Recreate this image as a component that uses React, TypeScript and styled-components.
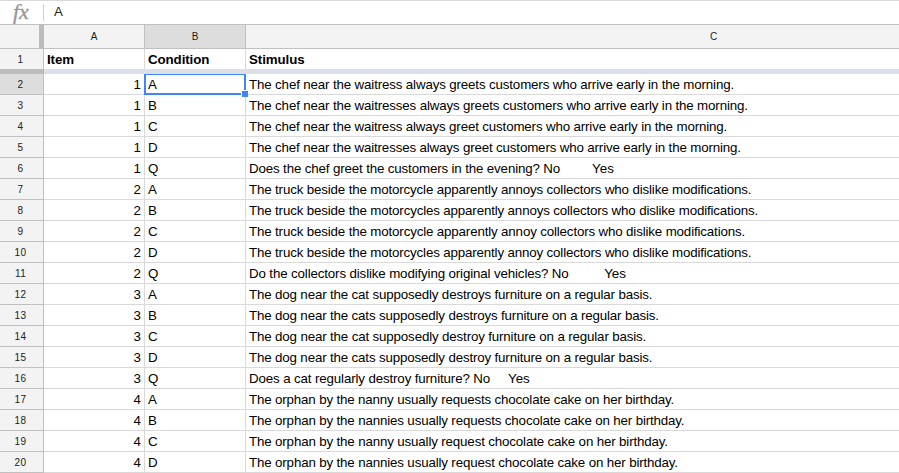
import React from "react";
import styled, { createGlobalStyle } from "styled-components";

const GlobalStyle = createGlobalStyle`
  html, body { margin: 0; padding: 0; background: #fff; }
  * { box-sizing: border-box; }
`;

const Sheet = styled.div`
  width: 899px;
  height: 473px;
  overflow: hidden;
  background: #fff;
  color: #000;
  font-family: "Liberation Sans", Arial, sans-serif;
  font-size: 13.333px;
`;

const FormulaBar = styled.div`
  display: flex;
  align-items: center;
  height: 24px;
  border-top: 1px solid #d9d9d9;
`;

const FunctionLabel = styled.div`
  width: 44px;
  height: 17px;
  padding-left: 13px;
  margin-top: -1px;
  border-right: 1px solid #d0d0d0;
  color: #969696;
  -webkit-text-stroke: 0.4px #a0a0a0;
  font: italic 22px/15px "Liberation Serif", serif;
`;

const FormulaText = styled.div`
  padding-left: 10px;
  margin-top: -2px;
  color: #222;
`;

const Grid = styled.div`
  display: grid;
  grid-template-columns: 44px 101px 101px 936px;
`;

const HeaderCell = styled.div<{ $active?: boolean }>`
  height: 25px;
  border: solid #c0c0c0;
  border-width: 1px 1px 1px 0;
  background: ${(p) => (p.$active ? "#dddddd" : "#f3f3f3")};
  color: #222;
  font-size: 10px;
  line-height: 24px;
  text-align: center;
`;

const Corner = styled(HeaderCell)`
  border-right: 5px solid #bcbcbc;
`;

const RowHeader = styled.div<{ $active?: boolean; $frozen?: boolean }>`
  height: ${(p) => (p.$frozen ? 20 : 21)}px;
  padding-right: 2px;
  border: solid #c0c0c0;
  border-width: ${(p) => (p.$frozen ? "0 1px 0 0" : "0 1px 1px 0")};
  background: ${(p) => (p.$active ? "#dddddd" : "#f3f3f3")};
  color: #222;
  font-size: 10px;
  letter-spacing: 0.4px;
  line-height: 22px;
  text-align: center;
`;

const Cell = styled.div<{ $right?: boolean; $frozen?: boolean }>`
  position: relative;
  height: ${(p) => (p.$frozen ? 20 : 21)}px;
  padding: 0 3px;
  border: solid #d9d9d9;
  border-width: ${(p) => (p.$frozen ? "0 1px 0 0" : "0 1px 1px 0")};
  font-weight: ${(p) => (p.$frozen ? "bold" : "normal")};
  letter-spacing: ${(p) => (p.$frozen ? "-0.1px" : "0")};
  line-height: 21px;
  text-align: ${(p) => (p.$right ? "right" : "left")};
  white-space: pre;
`;

const Line = styled.span<{ $track: number }>`
  letter-spacing: ${(p) => p.$track}px;
`;

const Answer = styled.span<{ $gap: number }>`
  margin-left: ${(p) => p.$gap}px;
`;

const FreezeHandle = styled.div`
  height: 5px;
  background: #bcbcbc;
`;

const FreezeBar = styled.div`
  grid-column: 2 / -1;
  height: 5px;
  background: #dbdfe7;
`;

const Selection = styled.div`
  position: absolute;
  z-index: 1;
  inset: 0 -1px -1px -1px;
  border: 2px solid #4285f4;
  border-top-width: 1px;
`;

const FillHandle = styled.div`
  position: absolute;
  right: -4px;
  bottom: -4px;
  width: 7px;
  height: 7px;
  border: solid #fff;
  border-width: 1px 0 0 1px;
  background: #4285f4;
`;

type Row = { item: number; condition: string; text: string; track: number; answer?: string; gap?: number };

const rows: Row[] = [
  { item: 1, condition: "A", track: -0.145, text: "The chef near the waitress always greets customers who arrive early in the morning." },
  { item: 1, condition: "B", track: -0.145, text: "The chef near the waitresses always greets customers who arrive early in the morning." },
  { item: 1, condition: "C", track: -0.15, text: "The chef near the waitress always greet customers who arrive early in the morning." },
  { item: 1, condition: "D", track: -0.15, text: "The chef near the waitresses always greet customers who arrive early in the morning." },
  { item: 1, condition: "Q", track: -0.144, text: "Does the chef greet the customers in the evening? No", answer: "Yes", gap: 32 },
  { item: 2, condition: "A", track: -0.153, text: "The truck beside the motorcycle apparently annoys collectors who dislike modifications." },
  { item: 2, condition: "B", track: -0.15, text: "The truck beside the motorcycles apparently annoys collectors who dislike modifications." },
  { item: 2, condition: "C", track: -0.15, text: "The truck beside the motorcycle apparently annoy collectors who dislike modifications." },
  { item: 2, condition: "D", track: -0.153, text: "The truck beside the motorcycles apparently annoy collectors who dislike modifications." },
  { item: 2, condition: "Q", track: -0.137, text: "Do the collectors dislike modifying original vehicles? No", answer: "Yes", gap: 35.5 },
  { item: 3, condition: "A", track: -0.155, text: "The dog near the cat supposedly destroys furniture on a regular basis." },
  { item: 3, condition: "B", track: -0.155, text: "The dog near the cats supposedly destroys furniture on a regular basis." },
  { item: 3, condition: "C", track: -0.15, text: "The dog near the cat supposedly destroy furniture on a regular basis." },
  { item: 3, condition: "D", track: -0.155, text: "The dog near the cats supposedly destroy furniture on a regular basis." },
  { item: 3, condition: "Q", track: -0.135, text: "Does a cat regularly destroy furniture? No", answer: "Yes", gap: 18 },
  { item: 4, condition: "A", track: -0.155, text: "The orphan by the nanny usually requests chocolate cake on her birthday." },
  { item: 4, condition: "B", track: -0.15, text: "The orphan by the nannies usually requests chocolate cake on her birthday." },
  { item: 4, condition: "C", track: -0.15, text: "The orphan by the nanny usually request chocolate cake on her birthday." },
  { item: 4, condition: "D", track: -0.15, text: "The orphan by the nannies usually request chocolate cake on her birthday." },
];

export default function App() {
  return (
    <Sheet>
      <GlobalStyle />
      <FormulaBar>
        <FunctionLabel>fx</FunctionLabel>
        <FormulaText>A</FormulaText>
      </FormulaBar>
      <Grid>
        <Corner />
        <HeaderCell>A</HeaderCell>
        <HeaderCell $active>B</HeaderCell>
        <HeaderCell>C</HeaderCell>
        <RowHeader $frozen>1</RowHeader>
        <Cell $frozen>Item</Cell>
        <Cell $frozen>Condition</Cell>
        <Cell $frozen>Stimulus</Cell>
        <FreezeHandle />
        <FreezeBar />
        {rows.map((row, i) => (
          <React.Fragment key={i}>
            <RowHeader $active={i === 0}>{i + 2}</RowHeader>
            <Cell $right>{row.item}</Cell>
            <Cell>
              {row.condition}
              {i === 0 && (
                <Selection>
                  <FillHandle />
                </Selection>
              )}
            </Cell>
            <Cell>
              <Line $track={row.track}>{row.text}</Line>
              {row.answer && <Answer $gap={row.gap ?? 0}>{row.answer}</Answer>}
            </Cell>
          </React.Fragment>
        ))}
      </Grid>
    </Sheet>
  );
}
